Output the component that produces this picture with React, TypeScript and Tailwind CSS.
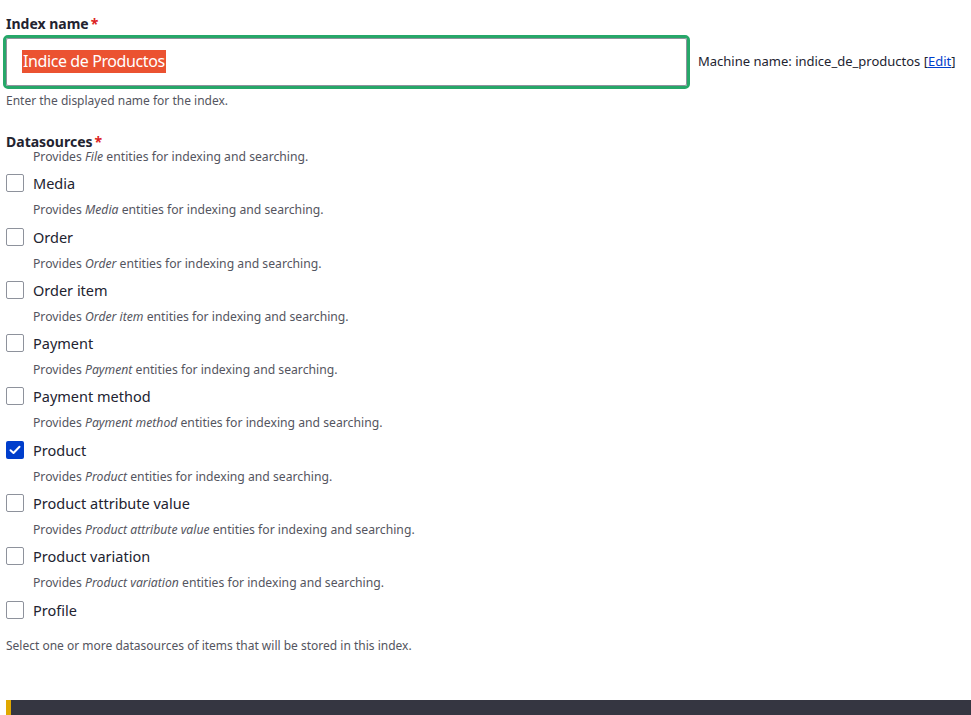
import React from 'react';

type Source = { label: string; checked?: boolean; hasDesc?: boolean };

const sources: Source[] = [
  { label: 'Media', hasDesc: true },
  { label: 'Order', hasDesc: true },
  { label: 'Order item', hasDesc: true },
  { label: 'Payment', hasDesc: true },
  { label: 'Payment method', hasDesc: true },
  { label: 'Product', checked: true, hasDesc: true },
  { label: 'Product attribute value', hasDesc: true },
  { label: 'Product variation', hasDesc: true },
  { label: 'Profile' },
];

function Checkbox({ checked }: { checked?: boolean }) {
  if (checked) {
    return (
      <span className="w-[18px] h-[18px] rounded-[2px] bg-[#003ecc] flex items-center justify-center flex-shrink-0">
        <svg width="12" height="10" viewBox="0 0 12 10" fill="none">
          <path d="M1.5 5.2 L4.5 8 L10.5 1.8" stroke="white" strokeWidth="2" strokeLinecap="round" strokeLinejoin="round" />
        </svg>
      </span>
    );
  }
  return <span className="w-[18px] h-[18px] rounded-[2px] border border-[#8e929c] bg-white flex-shrink-0" />;
}

function Desc({ name }: { name: string }) {
  return (
    <p className="text-[12.2px] leading-[16px] text-[#545560] pl-[27px]">
      Provides <em>{name}</em> entities for indexing and searching.
    </p>
  );
}

export default function App() {
  return (
    <div
      className="w-[971px] h-[715px] bg-white text-[#222330] overflow-hidden flex flex-col"
      style={{ fontFamily: '"Noto Sans", "Open Sans", sans-serif' }}
    >
      <div className="px-[6px] pt-[15px]">
        <label className="block text-[14px] leading-[18px] font-bold">
          Index name<span className="text-[#dc2323] ml-[2px]">*</span>
        </label>
        <div className="flex items-center mt-[2px]">
          <div className="-ml-[3px] w-[687px] h-[54px] rounded-[5px] border-[3px] border-[#26a769] flex-shrink-0">
            <div className="w-full h-full border border-[#8e929c] rounded-[2px] bg-white flex items-center pl-[15px] pb-[2px]">
              <span className="bg-[#eb5231] text-white text-[16px] tracking-[-0.4px] leading-[23px] px-[1px]">Indice de Productos</span>
            </div>
          </div>
          <span className="ml-[8px] text-[13px] whitespace-nowrap">
            Machine name: indice_de_productos [<a className="text-[#003ecc] underline">Edit</a>]
          </span>
        </div>
        <p className="text-[12px] leading-[16px] text-[#545560] mt-[4px]">Enter the displayed name for the index.</p>

        <label className="block text-[14px] leading-[18px] font-bold mt-[24px]">
          Datasources<span className="text-[#dc2323] ml-[2px]">*</span>
        </label>
        <div className="-mt-[2px]">
          <Desc name="File" />
          {sources.map((s) => (
            <div key={s.label} className="pt-[8.3px]">
              <div className="flex items-center gap-[9px] h-[20px]">
                <Checkbox checked={s.checked} />
                <span className="text-[14.5px] leading-[20px]">{s.label}</span>
              </div>
              {s.hasDesc && (
                <div className="mt-[9px]">
                  <Desc name={s.label} />
                </div>
              )}
            </div>
          ))}
        </div>
        <p className="text-[12px] leading-[16px] text-[#545560] mt-[18px]">
          Select one or more datasources of items that will be stored in this index.
        </p>
      </div>
      <div className="mt-auto h-[15px] bg-[#353641] ml-[6px] border-l-[5px] border-[#e0a800]" />
    </div>
  );
}
